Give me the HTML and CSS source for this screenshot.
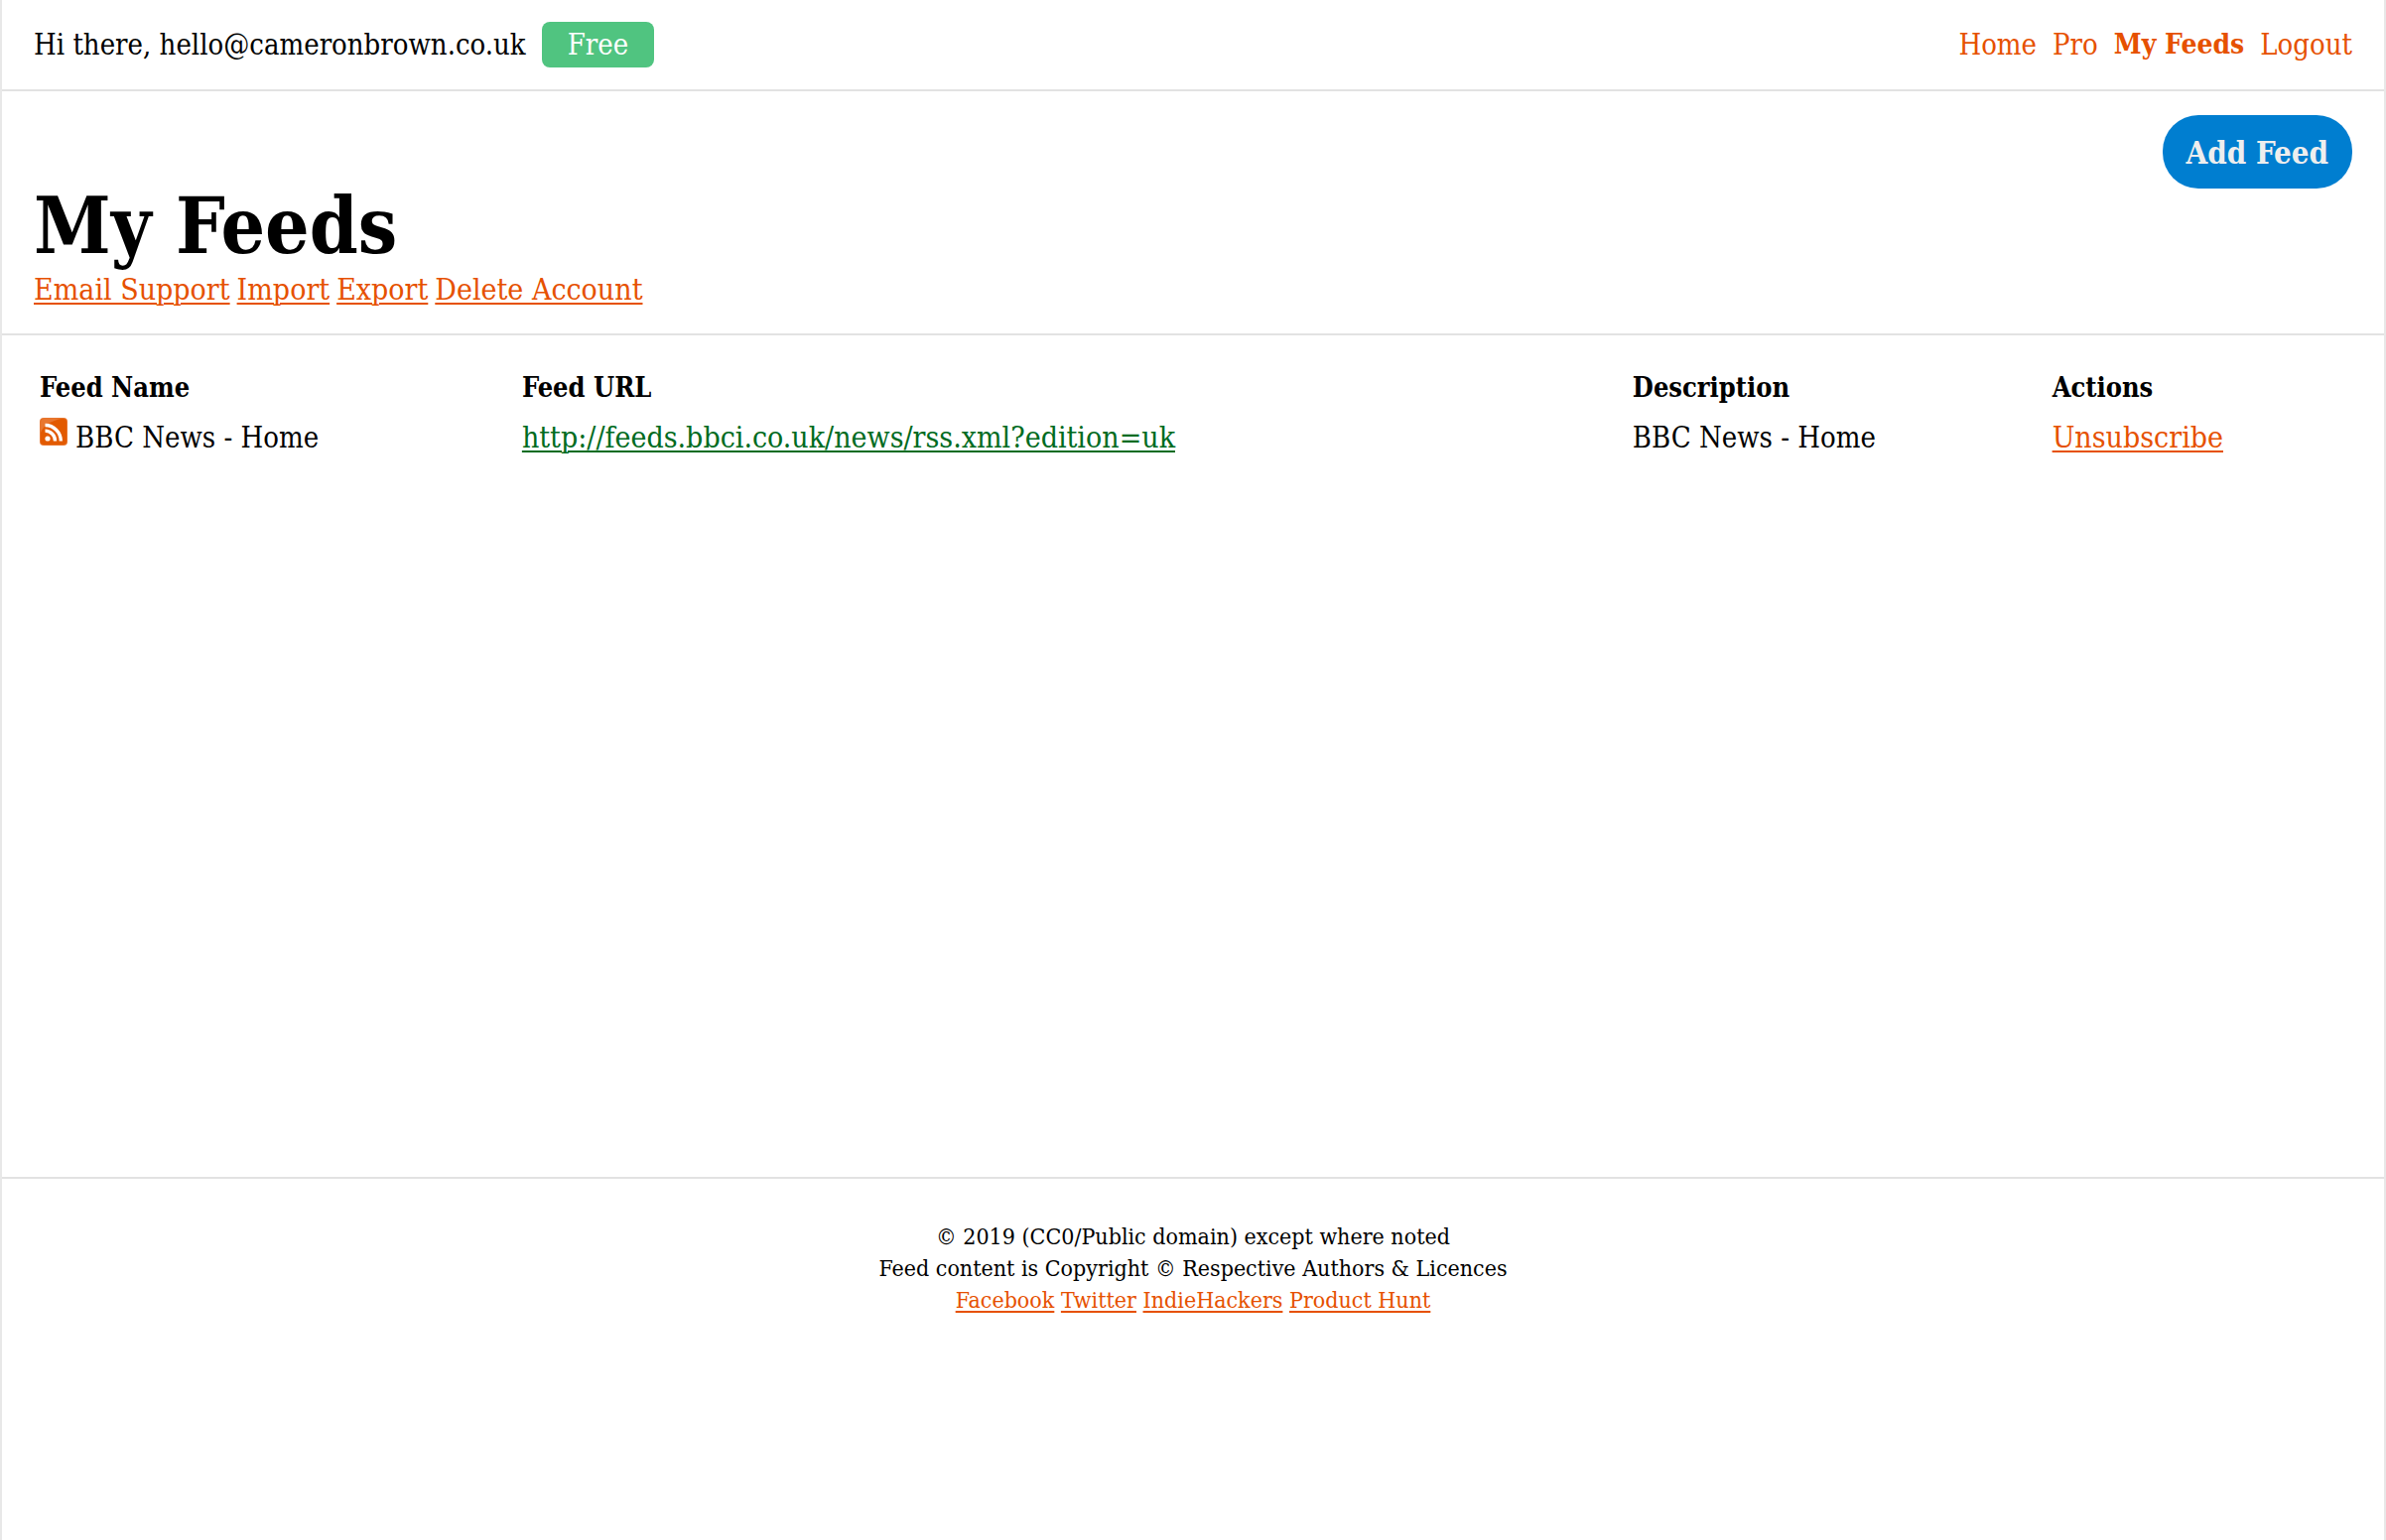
FILE: index.html
```html
<!DOCTYPE html>
<html lang="en">
<head>
    <meta charset="UTF-8">
    <meta name="viewport" content="width=device-width, initial-scale=1.0">
    <title>My Feeds</title>
    <link rel="stylesheet" href="styles.css">
</head>
<body>
    <div class="container">
        <header class="topbar">
            <div class="greeting">
                <span>Hi there, hello@cameronbrown.co.uk</span>
                <span class="badge">Free</span>
            </div>
            <nav class="menu">
                <a href="#">Home</a>
                <a href="#">Pro</a>
                <a href="#" class="active">My Feeds</a>
                <a href="#">Logout</a>
            </nav>
        </header>

        <section class="title">
            <div class="title-text">
                <h1>My Feeds</h1>
                <div class="links">
                    <a href="#">Email Support</a>
                    <a href="#">Import</a>
                    <a href="#">Export</a>
                    <a href="#">Delete Account</a>
                </div>
            </div>
            <button type="button" class="add-feed">Add Feed</button>
        </section>

        <main class="feeds">
            <table>
                <thead>
                    <tr>
                        <th class="col-name">Feed Name</th>
                        <th class="col-url">Feed URL</th>
                        <th class="col-desc">Description</th>
                        <th>Actions</th>
                    </tr>
                </thead>
                <tbody>
                    <tr>
                        <td>
                            <div class="feed-name">
                                <svg class="rss" viewBox="0 0 28 28" aria-hidden="true">
                                    <rect width="28" height="28" rx="4" fill="#e8742c"/>
                                    <rect x="1" y="1" width="26" height="26" rx="3" fill="#e25a00"/>
                                    <path d="M1 15V4a3 3 0 0 1 3-3h18C12 3 4 7 1 15z" fill="#e8772f"/>
                                    <circle cx="8" cy="21" r="2.6" fill="#fff"/>
                                    <path d="M5.5 13.2a10 10 0 0 1 10 10.3M5.5 7.5a16 16 0 0 1 15.8 16" fill="none" stroke="#fff" stroke-width="3.3"/>
                                </svg>
                                <span>BBC News - Home</span>
                            </div>
                        </td>
                        <td><a href="#" class="url">http://feeds.bbci.co.uk/news/rss.xml?edition=uk</a></td>
                        <td>BBC News - Home</td>
                        <td><a href="#">Unsubscribe</a></td>
                    </tr>
                </tbody>
            </table>
        </main>

        <footer>
            <p>© 2019 (CC0/Public domain) except where noted</p>
            <p>Feed content is Copyright © Respective Authors &amp; Licences</p>
            <p>
                <a href="#">Facebook</a>
                <a href="#">Twitter</a>
                <a href="#">IndieHackers</a>
                <a href="#">Product Hunt</a>
            </p>
        </footer>
    </div>
</body>
</html>
```
FILE: styles.css
```css
* {
    box-sizing: border-box;
}
body {
    margin: 0;
    background: #fff;
    color: #000;
    font-family: "Roboto Slab", "DejaVu Serif Condensed", "DejaVu Serif", serif;
    font-size: 29px;
    line-height: 40px;
}
a {
    color: #e65100;
    text-decoration-thickness: 2px;
    text-underline-offset: 3px;
}
.container {
    min-height: 100vh;
    border-left: 2px solid #e8e8e8;
    border-right: 2px solid #e8e8e8;
}
.topbar {
    display: flex;
    justify-content: space-between;
    align-items: center;
    height: 92px;
    padding: 0 32px;
    border-bottom: 2px solid #e2e2e2;
}
.greeting {
    display: flex;
    align-items: center;
    gap: 16px;
}
.badge {
    padding: 3px 26px;
    border-radius: 8px;
    background: #50c480;
    color: #fff;
}
.menu {
    display: flex;
    gap: 16px;
}
.menu a {
    text-decoration: none;
}
.menu .active {
    font-size: 28px;
    font-weight: bold;
}
.title {
    display: flex;
    justify-content: space-between;
    align-items: flex-start;
    padding: 24px 32px;
    border-bottom: 2px solid #e2e2e2;
}
.title-text {
    padding-top: 68px;
}
h1 {
    margin: 0;
    font-size: 78px;
    line-height: 88px;
}
.links {
    display: flex;
    gap: 7px;
    font-size: 30px;
}
.add-feed {
    padding: 18px 24px 16px;
    border: none;
    border-radius: 36px;
    background: #007ed0;
    color: #eee;
    font-family: inherit;
    font-size: 31px;
    font-weight: bold;
    line-height: 40px;
    cursor: pointer;
}
.feeds {
    min-height: 848px;
    padding: 28px 32px;
}
table {
    width: 100%;
    table-layout: fixed;
    border-collapse: collapse;
}
th, td {
    padding: 5px 6px;
    text-align: left;
    vertical-align: top;
}
th {
    font-size: 27px;
}
td {
    font-size: 29px;
}
.col-name {
    width: 20.8%;
}
.col-url {
    width: 47.9%;
}
.col-desc {
    width: 18.1%;
}
td a {
    font-size: 30px;
}
.url {
    color: #006b21;
}
.feed-name {
    display: flex;
    gap: 8px;
}
.rss {
    width: 28px;
    height: 28px;
}
footer {
    padding: 42px 32px;
    border-top: 2px solid #e2e2e2;
    font-size: 23px;
    line-height: 32px;
    text-align: center;
}
footer p {
    margin: 0;
}
```
